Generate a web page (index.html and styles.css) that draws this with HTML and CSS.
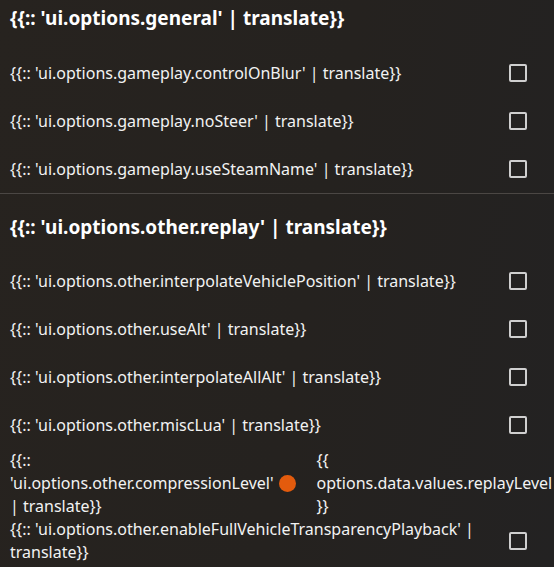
FILE: index.html
```html
<!DOCTYPE html>
<html>
<head>
<meta charset="utf-8">
<link rel="stylesheet" href="styles.css">
</head>
<body>
<div class="page">
  <section class="group">
    <h3 class="group-title">{{:: 'ui.options.general' | translate}}</h3>
    <div class="row"><span class="label">{{:: 'ui.options.gameplay.controlOnBlur' | translate}}</span><span class="check"></span></div>
    <div class="row"><span class="label">{{:: 'ui.options.gameplay.noSteer' | translate}}</span><span class="check"></span></div>
    <div class="row"><span class="label">{{:: 'ui.options.gameplay.useSteamName' | translate}}</span><span class="check"></span></div>
  </section>
  <section class="group second">
    <h3 class="group-title">{{:: 'ui.options.other.replay' | translate}}</h3>
    <div class="row"><span class="label">{{:: 'ui.options.other.interpolateVehiclePosition' | translate}}</span><span class="check"></span></div>
    <div class="row"><span class="label">{{:: 'ui.options.other.useAlt' | translate}}</span><span class="check"></span></div>
    <div class="row"><span class="label">{{:: 'ui.options.other.interpolateAllAlt' | translate}}</span><span class="check"></span></div>
    <div class="row"><span class="label">{{:: 'ui.options.other.miscLua' | translate}}</span><span class="check"></span></div>
    <div class="row slider-row">
      <span class="label narrow">{{:: 'ui.options.other.compressionLevel' | translate}}</span>
      <span class="thumb"></span>
      <span class="value">{{ options.data.values.replayLevel }}</span>
    </div>
    <div class="row tight"><span class="label">{{:: 'ui.options.other.enableFullVehicleTransparencyPlayback' | translate}}</span><span class="check"></span></div>
  </section>
</div>
</body>
</html>
```
FILE: styles.css
```css
html, body {
  margin: 0;
  padding: 0;
}
body {
  width: 554px;
  height: 567px;
  overflow: hidden;
  background: linear-gradient(100deg, #27231f 0%, #25221f 55%, #232222 100%);
  color: #ffffff;
  font-family: "Noto Sans", "Open Sans", sans-serif;
  font-size: 16px;
  line-height: 23px;
}
.group-title {
  margin: 0;
  padding: 6px 0 0 10px;
  font-size: 19px;
  font-weight: 700;
  line-height: 24px;
  height: 43px;
  box-sizing: content-box;
}
.group {
  border-bottom: 1px solid #4b4744;
}
.group.second {
  border-bottom: none;
}
.second .group-title {
  padding-top: 21px;
  height: 42px;
}
.row {
  display: flex;
  align-items: center;
  min-height: 48px;
  padding: 0 27px 0 10px;
}
.row.slider-row {
  min-height: 0;
  padding-right: 0;
}
.row.tight {
  min-height: 0;
}
.label {
  flex: 1 1 auto;
  color: #f2f2f2;
}
.label.narrow {
  flex: 0 0 262px;
}
.check {
  flex: 0 0 auto;
  width: 14px;
  height: 14px;
  border: 2px solid #cfcfcf;
  border-radius: 2px;
  margin-left: 12px;
}
.thumb {
  flex: 0 0 auto;
  width: 17px;
  height: 17px;
  border-radius: 50%;
  background: #e35b0d;
  margin-left: 5px;
  margin-right: 21px;
}
.value {
  flex: 1 1 auto;
  color: #f2f2f2;
}
```
